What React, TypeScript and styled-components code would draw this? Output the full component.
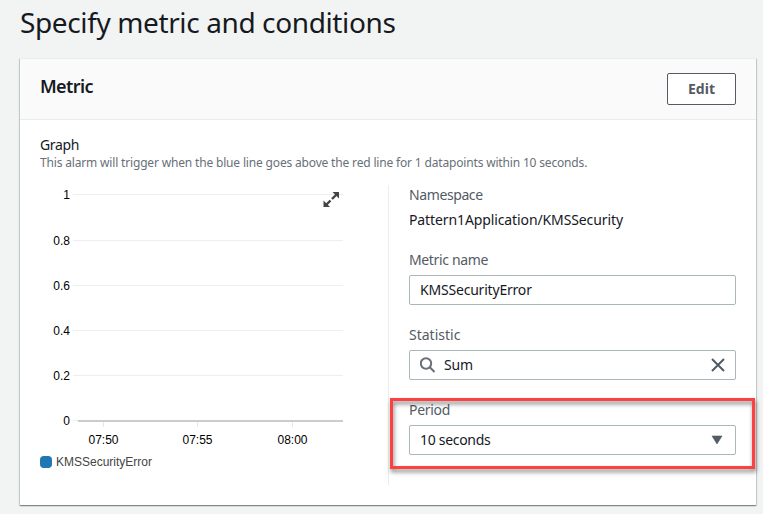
import React from "react";
import styled, { createGlobalStyle } from "styled-components";

const GlobalStyle = createGlobalStyle`
  *, *::before, *::after { box-sizing: border-box; }
  body {
    margin: 0;
    background: #f2f3f3;
    color: #16191f;
    font-family: "Noto Sans", "Open Sans", sans-serif;
    font-size: 14px;
    line-height: 20px;
    overflow: hidden;
  }
`;

const Page = styled.main`
  height: 514px;
  padding: 4px 7px 0 20px;
  overflow: hidden;
`;

const Title = styled.h1`
  margin: 0 0 18px;
  height: 36px;
  font-size: 28px;
  line-height: 36px;
  font-weight: 400;
  letter-spacing: -0.38px;
  white-space: nowrap;
`;

const Card = styled.section`
  width: 736px;
  height: 447px;
  background: #fff;
  border-top: 1px solid #eaeded;
  box-shadow: 0 1px 1px 0 rgba(0, 28, 36, 0.3), 1px 1px 1px 0 rgba(0, 28, 36, 0.15),
    -1px 1px 1px 0 rgba(0, 28, 36, 0.15);
`;

const CardHeader = styled.header`
  display: flex;
  justify-content: space-between;
  align-items: flex-start;
  height: 61px;
  padding: 14px 20px 0;
  background: #fafafa;
  border-bottom: 1px solid #eaeded;
`;

const CardTitle = styled.h2`
  margin: 2px 0 0;
  font-size: 18px;
  line-height: 22px;
  font-weight: 600;
  letter-spacing: -0.6px;
`;

const Button = styled.button`
  width: 69px;
  height: 32px;
  padding: 0 0 1px;
  border: 1px solid #545b64;
  border-radius: 2px;
  background: #fff;
  color: #545b64;
  font: 700 14px/20px "Noto Sans", sans-serif;
`;

const CardBody = styled.div`
  padding: 15px 20px 0;
`;

const GraphLabel = styled.div`
  height: 20px;
  letter-spacing: -0.35px;
`;

const Description = styled.p`
  margin: 0;
  height: 16px;
  font-size: 12px;
  line-height: 16px;
  color: #687078;
  white-space: nowrap;
  letter-spacing: -0.168px;
`;

const Columns = styled.div`
  display: flex;
  height: 300px;
  margin-top: 14px;
`;

const GraphColumn = styled.div`
  width: 348px;
`;

const Chart = styled.svg`
  display: block;
  width: 310px;
  height: 265px;
  text {
    font: 12px "Liberation Sans", Arial, sans-serif;
    fill: #000;
  }
`;

const Legend = styled.div`
  display: flex;
  align-items: center;
  gap: 4px;
  height: 24px;
  color: #444;
  font: 12px/16px "Liberation Sans", Arial, sans-serif;
`;

const Swatch = styled.span`
  width: 12px;
  height: 12px;
  border-radius: 4px;
  background: #1f77b4;
`;

const Details = styled.div`
  display: flex;
  flex-direction: column;
  gap: 20px;
  width: 348px;
  padding-left: 20px;
  border-left: 1px solid #eaeded;
`;

const Field = styled.div`
  position: relative;
  display: flex;
  flex-direction: column;
  gap: 5px;
`;

const Label = styled.div<{ $spacing?: string }>`
  height: 20px;
  color: #545b64;
  letter-spacing: ${(p) => p.$spacing ?? "-0.2px"};
`;

const Value = styled.div<{ $spacing?: string }>`
  height: 20px;
  white-space: nowrap;
  letter-spacing: ${(p) => p.$spacing ?? "-0.2px"};
`;

const Control = styled.div`
  display: flex;
  align-items: center;
  width: 327px;
  height: 30px;
  padding: 0 9px 0 10px;
  border: 1px solid #aab7b8;
  border-radius: 2px;
  background: #fff;
  svg { flex: none; display: block; }
  ${Value} { flex: 1; }
`;

const SearchIcon = styled.svg`
  width: 16px;
  height: 16px;
  margin-right: 8px;
`;

const ActionIcon = styled.svg`
  width: 16px;
  height: 16px;
`;

const CaretIcon = styled.svg`
  width: 12px;
  height: 10px;
  margin-right: 3px;
`;

const Highlight = styled.div`
  position: absolute;
  left: -19px;
  top: -2px;
  width: 365px;
  height: 71px;
  border: 3px solid #fb4141;
  filter: drop-shadow(1px 3px 2px rgba(0, 0, 0, 0.5));
  pointer-events: none;
`;

const gridLines = [
  { label: "1", y: 9.5 },
  { label: "0.8", y: 55.5 },
  { label: "0.6", y: 100.5 },
  { label: "0.4", y: 145.5 },
  { label: "0.2", y: 190.5 },
  { label: "0", y: 235.5 },
];

const ticks = [
  { label: "07:50", x: 63.5 },
  { label: "07:55", x: 157.5 },
  { label: "08:00", x: 252.5 },
];

function MetricChart() {
  return (
    <Chart viewBox="0 0 310 265">
      {gridLines.map((g) => (
        <g key={g.label}>
          <path d={`M33 ${g.y}H303`} stroke="#eee" />
          <text x="30" y={g.y + 4.5} textAnchor="end">{g.label}</text>
        </g>
      ))}
      {ticks.map((t) => (
        <g key={t.label}>
          <path d={`M${t.x} 237V242`} stroke="#e6e6e6" />
          <text x={t.x} y="259" textAnchor="middle">{t.label}</text>
        </g>
      ))}
      <path d="M38 236H303" stroke="#ccc" strokeWidth="2" />
      <g fill="#444" stroke="none">
        <path d="M292.5 7H299V13.5Z" />
        <path d="M283.5 15.5V22H290Z" />
      </g>
      <path d="M296.5 9.5L292 14M290.5 15.5L286 20" stroke="#444" strokeWidth="2.4" />
    </Chart>
  );
}

export default function App() {
  return (
    <>
      <GlobalStyle />
      <Page>
        <Title>Specify metric and conditions</Title>
        <Card>
          <CardHeader>
            <CardTitle>Metric</CardTitle>
            <Button>Edit</Button>
          </CardHeader>
          <CardBody>
            <GraphLabel>Graph</GraphLabel>
            <Description>
              This alarm will trigger when the blue line goes above the red line for 1 datapoints within 10 seconds.
            </Description>
            <Columns>
              <GraphColumn>
                <MetricChart />
                <Legend>
                  <Swatch />
                  KMSSecurityError
                </Legend>
              </GraphColumn>
              <Details>
                <Field>
                  <Label $spacing="-0.4px">Namespace</Label>
                  <Value $spacing="-0.11px">Pattern1Application/KMSSecurity</Value>
                </Field>
                <Field>
                  <Label $spacing="-0.36px">Metric name</Label>
                  <Control>
                    <Value>KMSSecurityError</Value>
                  </Control>
                </Field>
                <Field>
                  <Label $spacing="0px">Statistic</Label>
                  <Control>
                    <SearchIcon viewBox="0 0 16 16" fill="none" stroke="#687078" strokeWidth="2">
                      <circle cx="6" cy="6.5" r="5.2" />
                      <path d="M9.8 10.3L14.5 15" />
                    </SearchIcon>
                    <Value>Sum</Value>
                    <ActionIcon viewBox="0 0 16 16" fill="none" stroke="#545b64" strokeWidth="2">
                      <path d="M2 2L14 14M14 2L2 14" />
                    </ActionIcon>
                  </Control>
                </Field>
                <Field>
                  <Label $spacing="-0.3px">Period</Label>
                  <Control>
                    <Value $spacing="-0.3px">10 seconds</Value>
                    <CaretIcon viewBox="0 0 12 10" fill="#545b64">
                      <path d="M1 1H11L6 9Z" stroke="#545b64" strokeLinejoin="round" strokeWidth=".6" />
                    </CaretIcon>
                  </Control>
                  <Highlight />
                </Field>
              </Details>
            </Columns>
          </CardBody>
        </Card>
      </Page>
    </>
  );
}
